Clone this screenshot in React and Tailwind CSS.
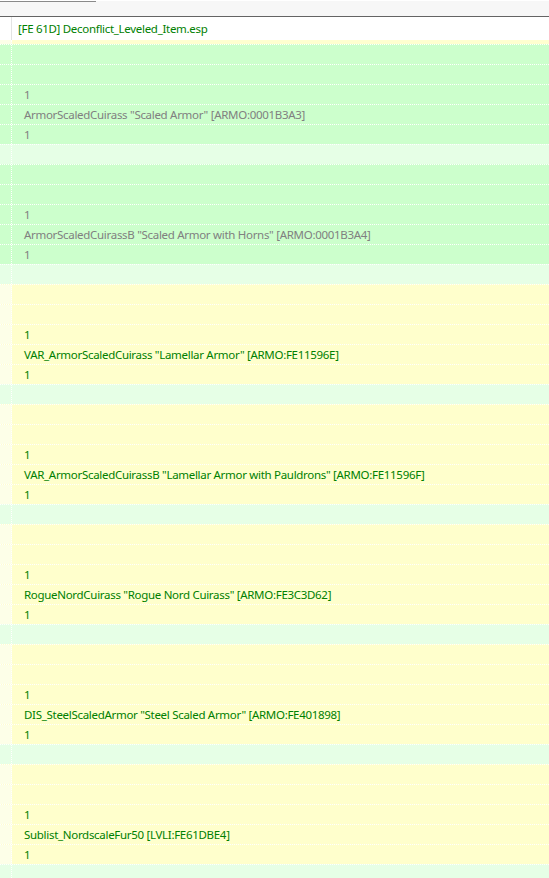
import React from 'react';

const records = [
  { tone: 'green', name: 'ArmorScaledCuirass "Scaled Armor" [ARMO:0001B3A3]' },
  { tone: 'green', name: 'ArmorScaledCuirassB "Scaled Armor with Horns" [ARMO:0001B3A4]' },
  { tone: 'yellow', name: 'VAR_ArmorScaledCuirass "Lamellar Armor" [ARMO:FE11596E]' },
  { tone: 'yellow', name: 'VAR_ArmorScaledCuirassB "Lamellar Armor with Pauldrons" [ARMO:FE11596F]' },
  { tone: 'yellow', name: 'RogueNordCuirass "Rogue Nord Cuirass" [ARMO:FE3C3D62]' },
  { tone: 'yellow', name: 'DIS_SteelScaledArmor "Steel Scaled Armor" [ARMO:FE401898]' },
  { tone: 'yellow', name: 'Sublist_NordscaleFur50 [LVLI:FE61DBE4]' },
];

// one grid row: narrow gutter cell + value cell
function Row({ bg, gutter, text, color }) {
  return (
    <div className={`flex h-[20px] border-t border-dotted border-white ${bg}`}>
      <div className={`w-[12px] shrink-0 border-r border-dotted border-white ${gutter}`} />
      <div className={`flex items-center pl-[12px] whitespace-nowrap ${color}`}>{text}</div>
    </div>
  );
}

function RecordGroup({ tone, name }) {
  const isGreen = tone === 'green';
  const bg = isGreen ? 'bg-[#ccffcc]' : 'bg-[#ffffcc]';
  const gutter = isGreen ? 'bg-[#ccffcc]' : 'bg-[#fdffe8]';
  const color = isGreen ? 'text-[#808080]' : 'text-[#008000]';
  return (
    <>
      <Row bg={bg} gutter={gutter} />
      <Row bg={bg} gutter={gutter} />
      <Row bg={bg} gutter={gutter} text="1" color={color} />
      <Row bg={bg} gutter={gutter} text={name} color={color} />
      <Row bg={bg} gutter={gutter} text="1" color={color} />
      <Row bg="bg-[#e6ffe6]" gutter="bg-[#e6ffe6]" />
    </>
  );
}

export default function App() {
  return (
    <div
      className="h-[878px] w-[549px] overflow-hidden bg-white text-[11.5px] tracking-[-0.3px]"
      style={{ fontFamily: '"Noto Sans", "Liberation Sans", sans-serif' }}
    >
      {/* top strip */}
      <div className="h-[16px] border-b border-[#646464] bg-[#f7f7f7]">
        <div className="mt-[1px] h-[1px] w-[96px] bg-[#8a8a8a]" />
      </div>

      {/* plugin header */}
      <div className="flex h-[23px]">
        <div className="w-[12px] shrink-0 border-r border-[#e3e3e3]" />
        <div className="flex items-center pl-[6px] text-[#008000]">[FE 61D] Deconflict_Leveled_Item.esp</div>
      </div>
      <div className="flex h-[4px] bg-[#ffffd0]">
        <div className="w-[12px] shrink-0 border-r border-dotted border-white bg-[#fdffe8]" />
      </div>

      {records.map((r) => (
        <RecordGroup key={r.name} tone={r.tone} name={r.name} />
      ))}
    </div>
  );
}
